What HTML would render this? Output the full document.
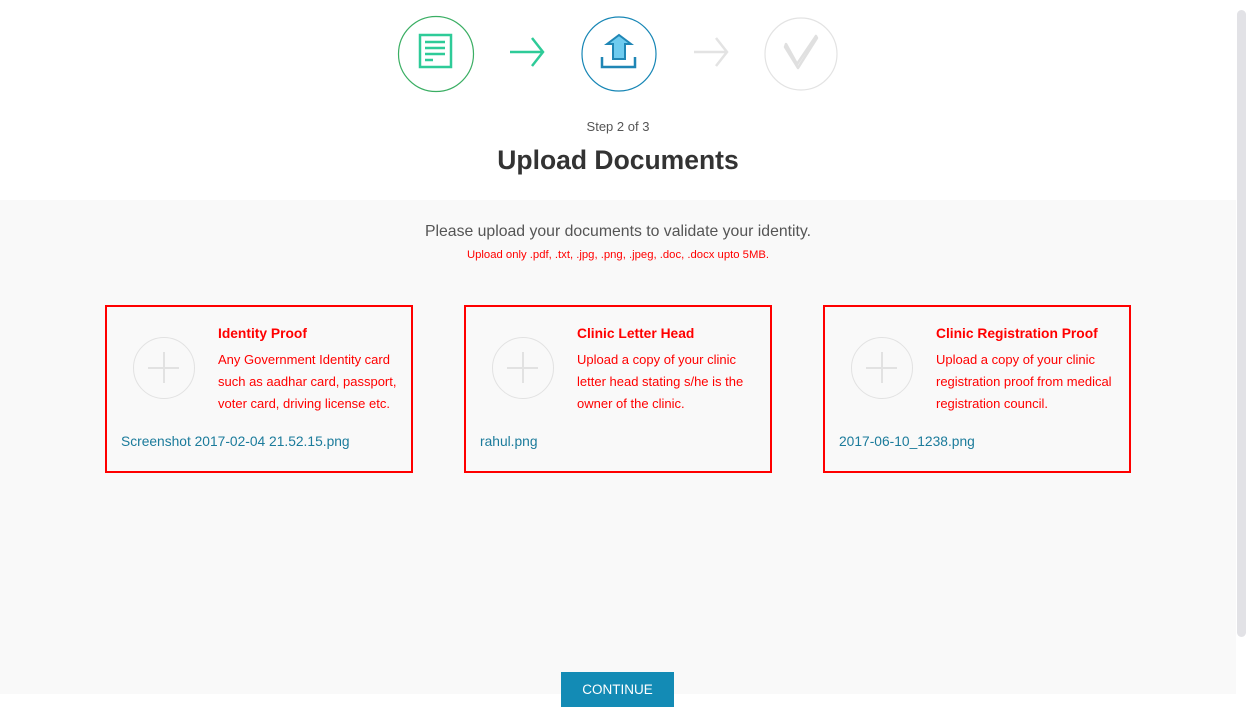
<!DOCTYPE html>
<html><head><meta charset="utf-8"><style>
*{margin:0;padding:0;box-sizing:border-box}
body{width:1246px;height:707px;overflow:hidden;background:#fff;font-family:"Liberation Sans",sans-serif;position:relative}
.abs{position:absolute}
.grey{left:0;top:200px;width:1236px;height:494px;background:#f9f9f9}
.sb{left:1237px;top:10px;width:9px;height:627px;background:#e2e2e6;border-radius:5px}
.card{position:absolute;top:305px;width:308px;height:168px;border:2px solid #f00}
.plus{position:absolute;left:26px;top:30px;width:62px;height:62px;border:1.5px solid #e2e2e2;border-radius:50%}
.plus:before{content:"";position:absolute;left:14px;top:29px;width:31px;height:2px;background:#e2e2e2}
.plus:after{content:"";position:absolute;left:29px;top:14px;width:2px;height:31px;background:#e2e2e2}
.t{position:absolute;left:111px;top:19px;color:#f00;font-weight:bold;font-size:13.8px}
.d{position:absolute;left:111px;top:42px;color:#f00;font-size:13px;line-height:22px;width:196px}
.f{position:absolute;left:14px;top:127px;color:#1b7b9b;font-size:13.8px}
</style></head><body>
<div class="abs grey"></div>
<div class="abs sb"></div>
<svg class="abs" style="left:0;top:0" width="1246" height="110">
<circle cx="436" cy="54" r="37.5" fill="none" stroke="#3aae63" stroke-width="1.2"/>
<rect x="420" y="35" width="31" height="32" fill="none" stroke="#2ecb98" stroke-width="2.5"/>
<g stroke="#2ecb98" stroke-width="2.5"><line x1="425" y1="42" x2="445" y2="42"/><line x1="425" y1="48" x2="445" y2="48"/><line x1="425" y1="54" x2="445" y2="54"/><line x1="425" y1="60" x2="433" y2="60"/></g>
<g stroke="#2ecb98" stroke-width="2.5" fill="none"><line x1="510" y1="52" x2="543" y2="52"/><polyline points="532,38 543,52 532,66"/></g>
<circle cx="619" cy="54" r="37" fill="none" stroke="#1786b5" stroke-width="1.2"/>
<path d="M607,44 L619,35 L631,44 L625,44 L625,59 L613,59 L613,44 Z" fill="#6ecbef" stroke="#1f86b5" stroke-width="2"/>
<polyline points="602,57 602,67 635,67 635,57" fill="none" stroke="#1f86b5" stroke-width="2.5"/>
<g stroke="#e3e3e3" stroke-width="2.5" fill="none"><line x1="694" y1="52" x2="726" y2="52"/><polyline points="716,38 727,52 716,66"/></g>
<circle cx="801" cy="54" r="36" fill="none" stroke="#e3e3e3" stroke-width="1.2"/>
<path d="M786,44 L797,64 L816,36 L817,38 L798,68 L785,47 Z" fill="#f2f2f2" stroke="#e0e0e0" stroke-width="2.5" stroke-linejoin="round"/>
</svg>
<div class="abs" style="left:0;width:1236px;top:119px;text-align:center;font-size:13px;color:#555">Step 2 of 3</div>
<div class="abs" style="left:0;width:1236px;top:145px;text-align:center;font-size:26.5px;font-weight:bold;color:#333">Upload Documents</div>
<div class="abs" style="left:0;width:1236px;top:223px;text-align:center;font-size:15.8px;color:#555">Please upload your documents to validate your identity.</div>
<div class="abs" style="left:0;width:1236px;top:249px;text-align:center;font-size:11.3px;color:#f00">Upload only .pdf, .txt, .jpg, .png, .jpeg, .doc, .docx upto 5MB.</div>
<div class="card" style="left:105px"><div class="plus"></div><div class="t">Identity Proof</div><div class="d">Any Government Identity card such as aadhar card, passport, voter card, driving license etc.</div><div class="f">Screenshot 2017-02-04 21.52.15.png</div></div>
<div class="card" style="left:464px"><div class="plus"></div><div class="t">Clinic Letter Head</div><div class="d" style="width:180px">Upload a copy of your clinic letter head stating s/he is the owner of the clinic.</div><div class="f">rahul.png</div></div>
<div class="card" style="left:823px"><div class="plus"></div><div class="t">Clinic Registration Proof</div><div class="d">Upload a copy of your clinic registration proof from medical registration council.</div><div class="f">2017-06-10_1238.png</div></div>
<div class="abs" style="left:561px;top:672px;width:113px;height:35px;background:#138bb5;color:#fff;font-size:13.5px;text-align:center;line-height:36px">CONTINUE</div>
</body></html>
